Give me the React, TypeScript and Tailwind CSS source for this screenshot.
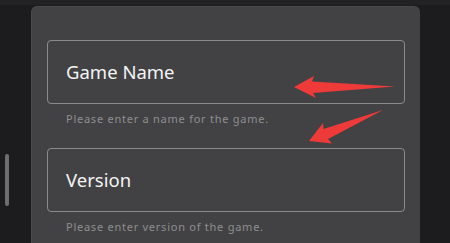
const fields = [
  { label: "Game Name", hint: "Please enter a name for the game." },
  { label: "Version", hint: "Please enter version of the game." },
];

const Arrows = () => (
  <svg
    className="pointer-events-none absolute left-0 top-0"
    width="450"
    height="243"
    viewBox="0 0 450 243"
  >
    <path d="M294 87 L314 76 L312 81.5 L395 86.5 L313 93 L316 98 Z" fill="#ef3a3a" />
    <path
      d="M309 141 L323 123 L323.5 129 L383 110 L328 139 L332 143.5 Z"
      fill="#ef3a3a"
    />
  </svg>
);

export default function App() {
  return (
    <div
      className="relative h-[243px] w-[450px] overflow-hidden bg-[#1c1c1e]"
      style={{ fontFamily: '"Noto Sans", "Open Sans", sans-serif' }}
    >
      <div className="h-[5px] bg-[#222224]" />
      <div className="flex">
        {/* scrollbar */}
        <div className="w-[31px] pl-[5px] pt-[149px]">
          <div className="h-[52px] w-[4px] rounded-full bg-[#6e6e70]" />
        </div>
        <div className="mt-[1px] h-[260px] w-[389px] rounded-t-[6px] border-l border-t border-[#4a4a4c] bg-[#424244] px-[15px] pt-[33px]">
          <div className="flex flex-col gap-[22px]">
            {fields.map((f) => (
              <div key={f.label} className="flex flex-col">
                <div className="flex h-[64px] items-center rounded-[4px] border border-[#8a8a8c] pl-[18px] text-[18.5px] text-[#f4f4f4]">
                  {f.label}
                </div>
                <div className="mt-[7px] pl-[19px] text-[11px] leading-[15px] tracking-[0.75px] text-[#8e8e90]">
                  {f.hint}
                </div>
              </div>
            ))}
          </div>
        </div>
      </div>
      <Arrows />
    </div>
  );
}
